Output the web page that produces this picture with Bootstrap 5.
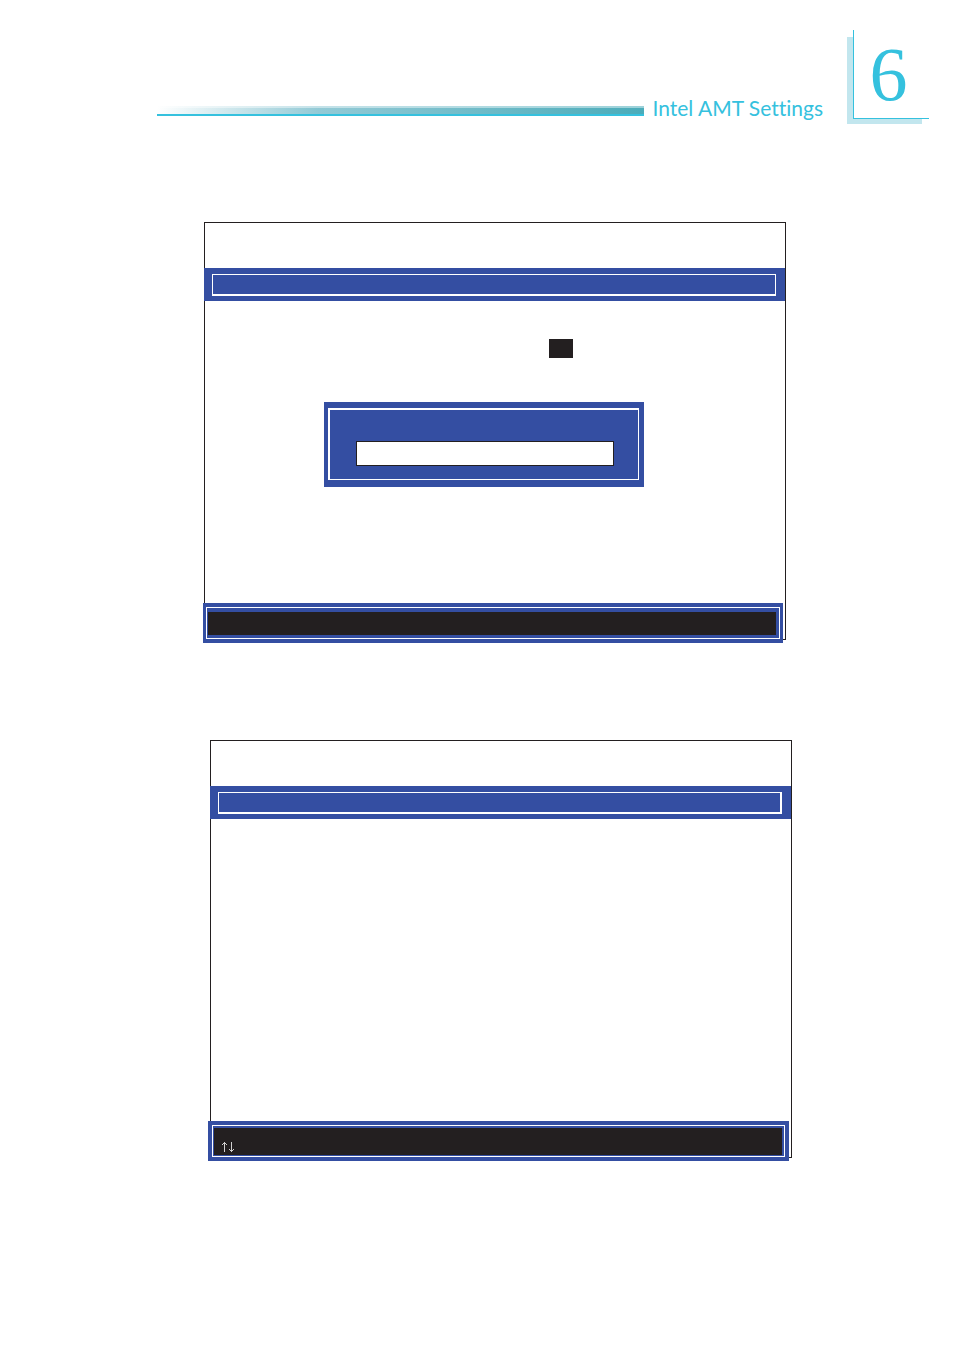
<!DOCTYPE html>
<html lang="en">
<head>
<meta charset="utf-8">
<meta name="viewport" content="width=device-width, initial-scale=1">
<title>Intel AMT Settings</title>
<link rel="stylesheet" href="https://cdn.jsdelivr.net/npm/bootstrap@5.3.0/dist/css/bootstrap.min.css">
<style>
  :root { --cyan: #35c1de; --blue: #344ea2; --ink: #231f20; }
  body { font-family: Lato, "Open Sans", sans-serif; background: #fff; }
  .page-head { padding: 30px 25px 0 157px; }
  .rule { height: 10px; margin-bottom: 8px; border-bottom: 2px solid var(--cyan);
    background: linear-gradient(rgba(255,255,255,.45), rgba(255,255,255,.45)) top / 100% 2px no-repeat,
      linear-gradient(90deg, #fff, #93cad6 33%, #4bacba); }
  .chapter-title { font-size: 21px; line-height: 32px; margin: 0 24px 0 8px; color: var(--cyan); font-variant-ligatures: none; }
  .chapter { width: 82px; height: 94px; padding: 0 0 5px 6px; }
  .chapter::before { content: ""; position: absolute; inset: 7px 7px 0 0; background: #c2e6ee; }
  .chapter-face { background: #fff; border: solid var(--cyan); border-width: 0 0 1px 1px;
    color: var(--cyan); font: 76px/88px "Liberation Serif", serif; padding: 0 6px 0 0; }
  .screens { padding: 98px 162px 60px 204px; }
  .screen { height: 418px; border: 1px solid var(--ink); }
  .screen-first { margin: 0 6px 100px 0; }
  .screen-second { margin-left: 6px; }
  .title-bar { height: 33px; margin: 45px 0 0 -1px; padding: 6px 9px 5px 8px; background: var(--blue); }
  .title-line { border: solid #fff; border-width: 1px 1px 2px; }
  .screen-second .title-line { border-right-width: 2px; }
  .cursor-block { width: 24px; height: 19px; margin: 38px 212px 44px auto; background: var(--ink); }
  .prompt { width: 320px; height: 85px; margin-left: 119px; padding: 6px 5px 7px 4px; background: var(--blue); }
  .prompt-frame { border: solid #fff; border-width: 2px 1px 1px 2px; padding: 31px 24px 0 26px; }
  .prompt-input { height: 25px; border: 1px solid var(--ink); border-radius: 0; padding: 0 4px; }
  .key-bar { height: 40px; margin: 0 2px -4px -2px; padding: 4px 3px; background: var(--blue); }
  .key-frame { border: 1px solid #fff; padding: 4px 3px 3px 1px; }
  .screen-second .key-bar { margin-left: -3px; padding: 4px; }
  .screen-second .key-frame { padding: 2px 2px 1px 1px; }
  .key-text { background: var(--ink); color: #fff; }
  .arrows { display: block; margin: 0 0 2px 7px; }
</style>
</head>
<body>
<header class="page-head d-flex align-items-end">
  <div class="rule flex-grow-1"></div>
  <h1 class="chapter-title fw-normal text-nowrap">Intel AMT Settings</h1>
  <div class="chapter position-relative flex-shrink-0">
    <div class="chapter-face position-relative h-100 text-center">6</div>
  </div>
</header>
<main class="screens">
  <section class="screen screen-first d-flex flex-column">
    <div class="title-bar d-flex flex-shrink-0"><div class="title-line flex-grow-1"></div></div>
    <div class="cursor-block flex-shrink-0"></div>
    <div class="prompt d-flex">
      <div class="prompt-frame flex-grow-1">
        <input class="prompt-input form-control" type="text" aria-label="Entry">
      </div>
    </div>
    <div class="key-bar d-flex flex-shrink-0 mt-auto"><div class="key-frame d-flex flex-grow-1"><div class="key-text flex-grow-1"></div></div></div>
  </section>
  <section class="screen screen-second d-flex flex-column">
    <div class="title-bar d-flex flex-shrink-0"><div class="title-line flex-grow-1"></div></div>
    <div class="key-bar d-flex flex-shrink-0 mt-auto">
      <div class="key-frame d-flex flex-grow-1">
        <div class="key-text d-flex align-items-end flex-grow-1">
          <svg class="arrows" width="14" height="12" viewBox="0 0 14 12" fill="none" stroke="#fff" stroke-width="0.8" aria-label="Up and down arrows" role="img">
            <path d="M3.500 11V1.500M1 4L3.500 1.500L6 4M10.500 1V10.500M8 8L10.500 10.500L13 8"/>
          </svg>
        </div>
      </div>
    </div>
  </section>
</main>
<script src="https://cdn.jsdelivr.net/npm/bootstrap@5.3.0/dist/js/bootstrap.bundle.min.js"></script>
</body>
</html>
